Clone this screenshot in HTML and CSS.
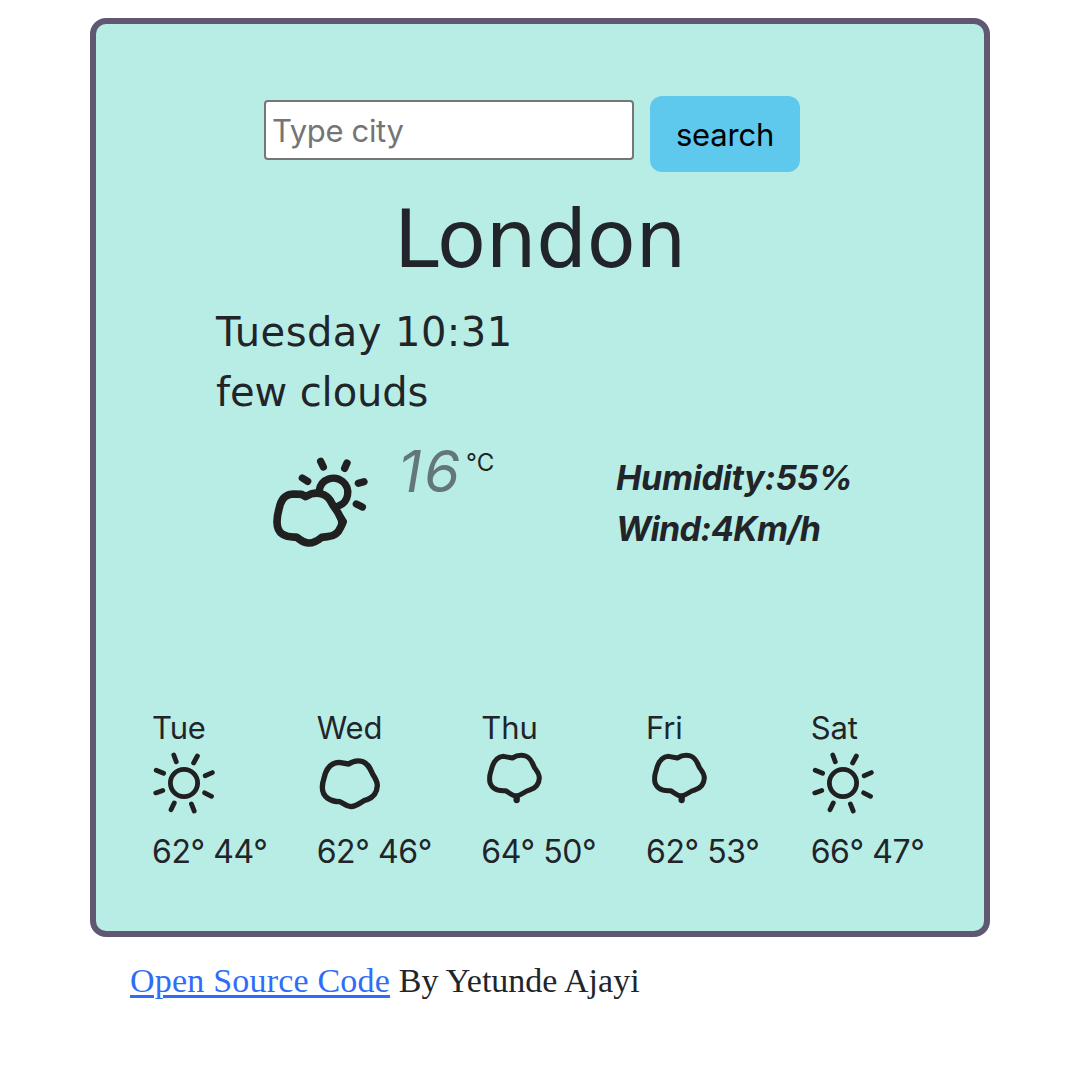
FILE: index.html
```html
<!DOCTYPE html>
<html lang="en">
<head>
<meta charset="utf-8">
<title>Weather</title>
<link rel="stylesheet" href="styles.css">
</head>
<body>
<svg class="sprite" aria-hidden="true">
  <symbol id="sun" viewBox="0 0 64 64">
    <circle cx="32" cy="33" r="13.6" stroke-width="4.8"/>
    <path stroke-width="4.8" d="M21.8 5 24.3 11.8M45.4 6 41.6 13M4.2 20.2 11.6 23.3M60.4 22.6 53.2 25.7M3.8 42.9 10.8 40.5M59.5 46.3 52.6 42.8M19 59.8 22.3 52.9M42.2 61 39.4 53.9"/>
  </symbol>
  <symbol id="cloud" viewBox="0 0 192 192">
    <path stroke-width="16" d="M16 112C16 94 22 84 25 70C33 49 48 38 66 37L95 42C108 33 126 31 138 35C154 41 160 57 168 74C175 86 181 94 181 107C180 127 170 142 150 149C134 152 124 168 102 170C86 169 80 159 69 155C55 155 42 152 31 144C20 136 16 124 16 112Z"/>
  </symbol>
  <symbol id="rain" viewBox="0 0 192 192">
    <path stroke-width="15" d="M26 86C25 72 30 66 33 52C39 33 52 20 68 19L94 24C107 16 122 14 134 18C148 23 154 36 160 52C168 64 175 70 175 84C174 102 164 115 146 120C130 123 122 137 106 138C92 137 84 127 74 122C60 123 46 120 38 114C28 106 25 98 26 86Z"/>
    <path stroke-width="19" d="M107 140V150"/>
  </symbol>
</svg>
<main class="card">
  <form class="search">
    <input class="search-input" type="text" placeholder="Type city">
    <button class="search-button" type="button">search</button>
  </form>
  <h1 class="city">London</h1>
  <div class="summary">
    <div class="date">Tuesday 10:31</div>
    <div class="condition">few clouds</div>
  </div>
  <section class="current">
    <svg class="icon current-icon" viewBox="0 0 300 300">
      <path stroke-width="22" d="M148 120A43 43 0 1 1 205 168"/>
      <path stroke-width="23" d="M21 215C21 192 27 180 30 165C37 142 52 132 72 132L95 133 107 140 125 131C155 125 175 138 184 157C191 172 203 183 208 196C217 208 217 222 212 232C205 249 192 259 173 260L155 262C143 272 132 280 115 279C98 279 90 267 78 261C62 262 48 259 38 253C26 245 21 232 21 215Z"/>
      <path stroke-width="22" d="M211 202 220 215 216 224M152 34 160 51M231 39 224 55M97 84 113 94M282 95 265 100M259 162 277 171"/>
    </svg>
    <span class="temperature">16</span><span class="unit">°C</span>
    <div class="details">
      <div>Humidity:55%</div>
      <div class="wind">Wind:4Km/h</div>
    </div>
  </section>
  <section class="forecast">
    <div class="day"><span class="name">Tue</span><svg class="icon"><use href="#sun"/></svg><span class="range">62° 44°</span></div>
    <div class="day"><span class="name">Wed</span><svg class="icon"><use href="#cloud"/></svg><span class="range">62° 46°</span></div>
    <div class="day"><span class="name">Thu</span><svg class="icon"><use href="#rain"/></svg><span class="range">64° 50°</span></div>
    <div class="day"><span class="name">Fri</span><svg class="icon"><use href="#rain"/></svg><span class="range">62° 53°</span></div>
    <div class="day"><span class="name">Sat</span><svg class="icon"><use href="#sun"/></svg><span class="range">66° 47°</span></div>
  </section>
</main>
<footer class="credit"><a class="credit-link" href="#">Open Source Code</a> <span class="author">By Yetunde Ajayi</span></footer>
</body>
</html>
```
FILE: styles.css
```css
* { box-sizing: border-box; }
body {
  margin: 0;
  padding-top: 18px;
  background: #fff;
  color: #212529;
  font-family: Inter, "Liberation Sans", sans-serif;
  font-size: 32px;
}
.sprite { position: absolute; width: 0; height: 0; }
.card {
  width: 900px;
  height: 919px;
  margin-left: 90px;
  padding: 72px 56px 0;
  border: 6px solid #605872;
  border-radius: 16px;
  background: #b8ede6;
}
.search {
  display: flex;
  align-items: flex-start;
  justify-content: center;
  gap: 16px;
  margin: 0 16px 0 0;
}
.search-input {
  width: 370px;
  height: 60px;
  margin-top: 4px;
  padding: 0 6px;
  border: 2px solid #767676;
  border-radius: 4px;
  background: #fff;
  font: 31px Inter, sans-serif;
  letter-spacing: -0.35px;
}
.search-input::placeholder { color: #757575; opacity: 1; }
.search-button {
  width: 150px;
  height: 76px;
  padding: 0;
  border: 0;
  border-radius: 12px;
  background: #5fc8ed;
  color: #000;
  font: 31px Inter, sans-serif;
  letter-spacing: -0.2px;
}
.city {
  margin: 20px 0 0;
  font: 400 80px/96px "DejaVu Sans", sans-serif;
  letter-spacing: -0.2px;
  text-align: center;
}
.summary {
  margin: 14px 0 0 64px;
  font: 40px/60px "DejaVu Sans", sans-serif;
}
.date { letter-spacing: 0.45px; }
.condition { letter-spacing: -0.1px; }
.current {
  display: flex;
  align-items: flex-start;
  height: 284px;
  padding: 28px 0 0 118px;
}
.icon {
  width: 64px;
  height: 64px;
  fill: none;
  stroke: #202020;
  stroke-linecap: round;
  stroke-linejoin: round;
  filter: blur(0.5px);
}
.current-icon { width: 100px; height: 100px; }
.temperature {
  width: 68px;
  margin: -11px 0 0 28px;
  color: #637779;
  font-size: 58px;
  font-style: italic;
  letter-spacing: 2.5px;
  line-height: 64px;
}
.unit {
  width: 150px;
  font-size: 24px;
  line-height: 25px;
}
.details {
  padding-top: 2px;
  font-size: 34px;
  font-style: italic;
  font-weight: 700;
  letter-spacing: -0.35px;
  line-height: 51px;
  white-space: nowrap;
}
.wind { letter-spacing: -0.7px; }
.forecast {
  display: grid;
  grid-template-columns: repeat(5, 164.67px);
}
.day {
  display: flex;
  flex-direction: column;
  letter-spacing: -0.4px;
  line-height: 44px;
  white-space: nowrap;
}
.name { font-size: 31px; letter-spacing: -0.1px; }
.range { margin-top: 16px; }
.credit {
  margin: 20px 0 0 130px;
  font: 34px/48px "Liberation Serif", serif;
  letter-spacing: 0.2px;
  white-space: nowrap;
}
.author { letter-spacing: 0; }
.credit-link {
  color: #2f6df6;
  text-decoration-thickness: 3px;
  text-underline-offset: 3px;
}
```
